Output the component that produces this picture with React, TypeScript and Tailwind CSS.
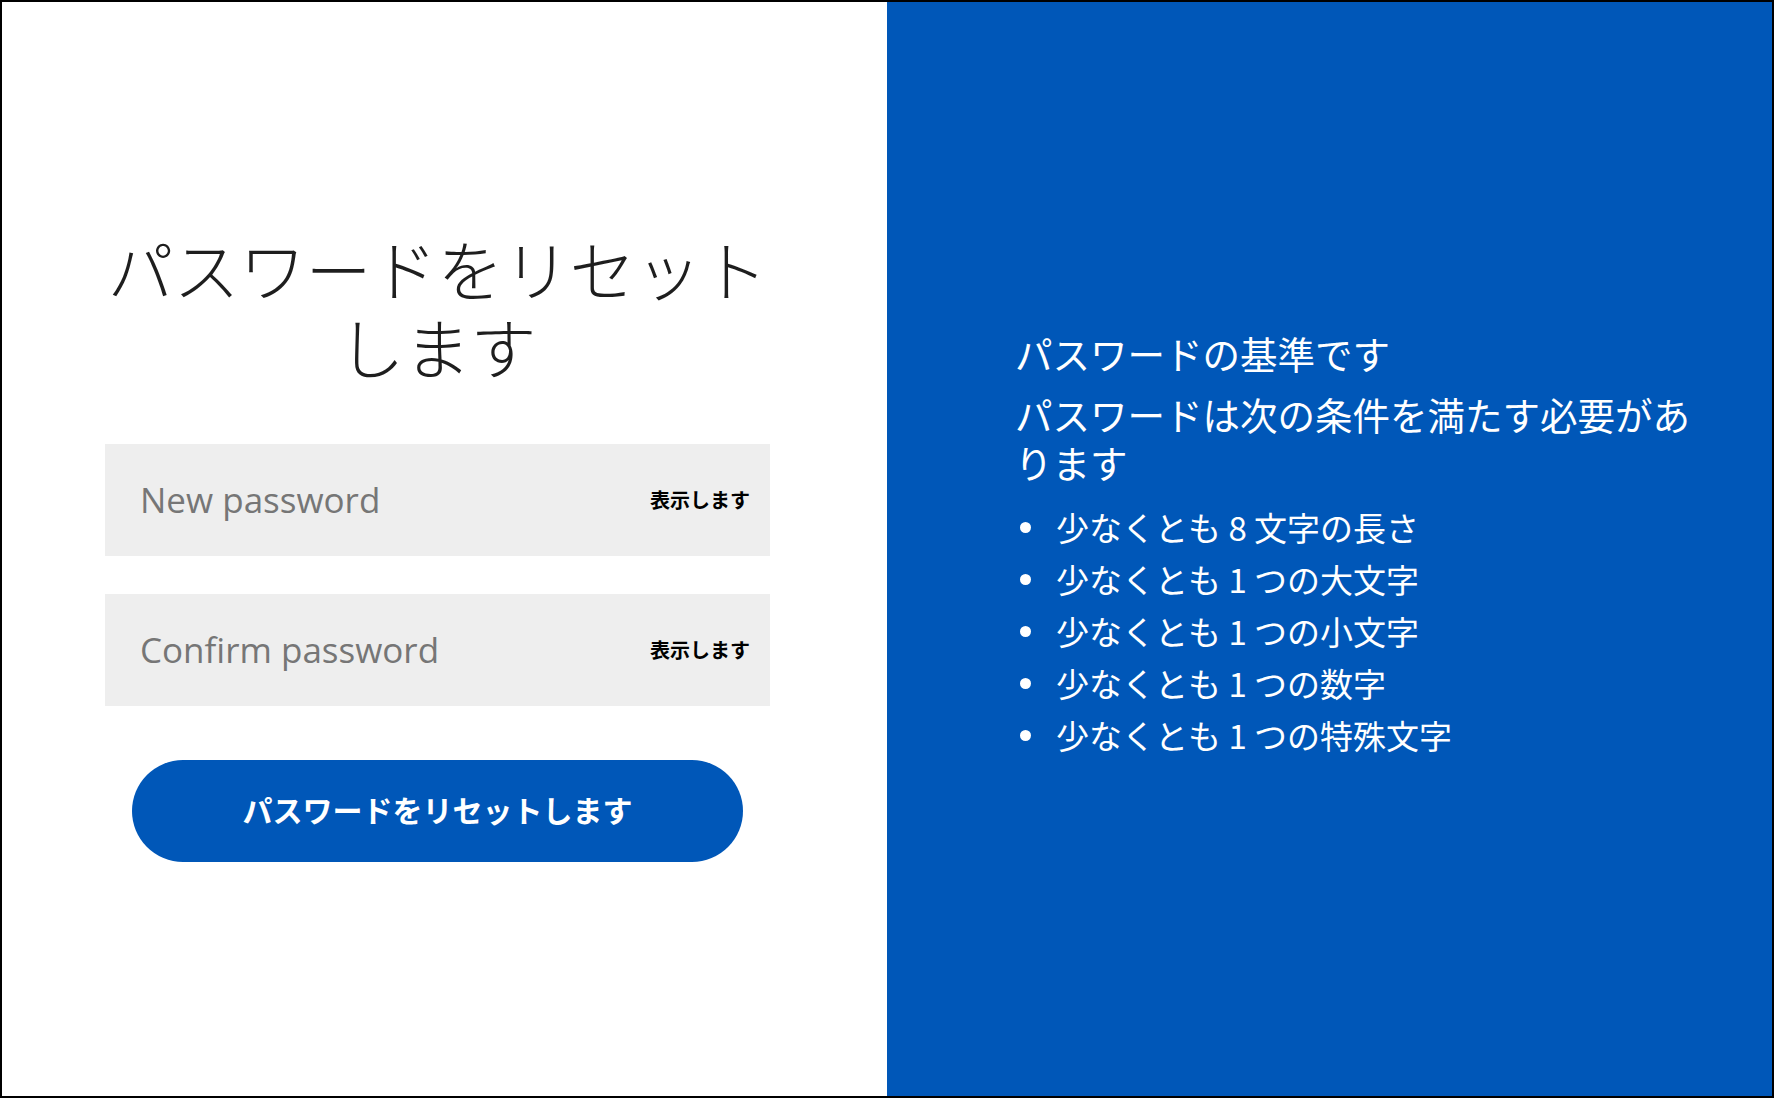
import React from "react";

const jp = { fontFamily: '"Noto Sans CJK JP", "Noto Sans", sans-serif' };

function PasswordField({ placeholder }: { placeholder: string }) {
  return (
    <div className="flex h-[112px] w-[665px] items-center bg-[#eeeeee] pl-[35px] pr-[20px]">
      <input
        type="password"
        placeholder={placeholder}
        className="min-w-0 flex-1 bg-transparent text-[35px] text-[#222] outline-none placeholder:text-[#767676]"
        style={{ fontFamily: '"Open Sans", "Noto Sans", sans-serif' }}
      />
      <span className="text-[20px] font-bold leading-none text-black" style={jp}>
        表示します
      </span>
    </div>
  );
}

const rules = [
  "少なくとも 8 文字の長さ",
  "少なくとも 1 つの大文字",
  "少なくとも 1 つの小文字",
  "少なくとも 1 つの数字",
  "少なくとも 1 つの特殊文字",
];

export default function App() {
  return (
    <div className="flex h-[1098px] w-[1774px] border-2 border-black bg-white" style={jp}>
      <div className="flex w-[885px] flex-col justify-center pl-[103px] pb-[8px]">
        <div className="flex w-[665px] flex-col">
          <h1 className="text-center text-[66px] font-light leading-[78px] text-[#1e1e1e]">
            パスワードをリセットします
          </h1>
          <div className="mt-[60px] flex flex-col gap-[38px]">
            <PasswordField placeholder="New password" />
            <PasswordField placeholder="Confirm password" />
          </div>
          <button className="mx-[27px] mt-[54px] flex h-[102px] items-center justify-center rounded-full bg-[#0057b8] pb-[3px] text-[30px] font-bold text-white">
            パスワードをリセットします
          </button>
        </div>
      </div>
      <div className="flex flex-1 flex-col justify-center bg-[#0057b8] pl-[128px] pb-[8px] text-white">
        <div className="w-[690px]">
          <h2 className="text-[37.5px] font-normal leading-[48px]">パスワードの基準です</h2>
          <p className="mt-[13px] text-[37.5px] font-normal leading-[48px]">
            パスワードは次の条件を満たす必要があります
          </p>
          <ul className="mt-[15px] flex flex-col">
            {rules.map((r) => (
              <li key={r} className="flex items-center text-[33px] font-normal leading-[52px]">
                <span className="ml-[5px] mr-[25px] h-[11px] w-[11px] shrink-0 rounded-full bg-white" />
                <span>{r}</span>
              </li>
            ))}
          </ul>
        </div>
      </div>
    </div>
  );
}
